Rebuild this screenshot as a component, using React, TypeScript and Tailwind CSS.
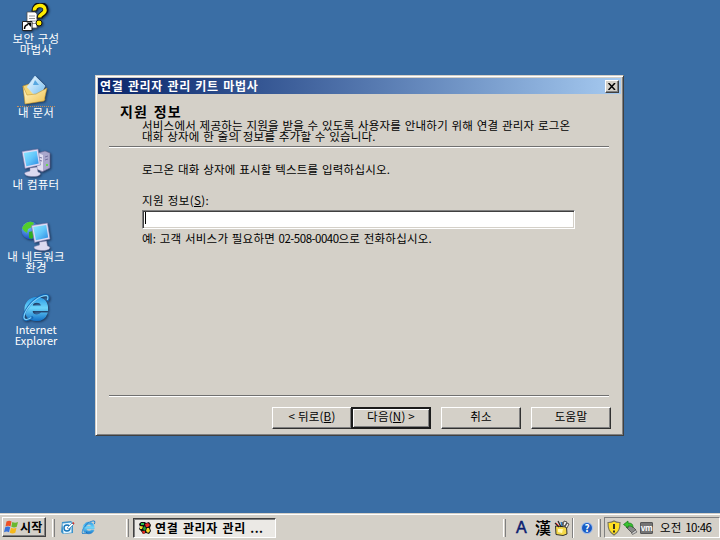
import type { ReactNode } from "react";

const shadow = "[filter:drop-shadow(1px_1px_1px_#1b3558)]";

function ShortcutIcon() {
  return (
    <svg width="30" height="30" viewBox="0 0 30 30" className={shadow}>
      <path d="M6 9h8l2 2v14H6z" fill="#fff" stroke="#555" strokeWidth=".8" />
      <path d="M8 13h6M8 15.500h6M9 18h6M11 20.500h4" stroke="#999" />
      <path d="M13.500 8.500C12.500 0 25.500 0 24.500 7c0 4-6 4-6 8.500" fill="none" stroke="#111" strokeWidth="5.800" />
      <path d="M13.500 7.500C13 1 24.500 1 24 7c0 4-5.500 4-5.500 7.500" fill="none" stroke="#ffec00" strokeWidth="3.600" />
      <circle cx="18" cy="20" r="3" fill="#ffec00" stroke="#111" />
      <path d="M1.500 18.500h9.500v9H1.500z" fill="#fff" stroke="#222" />
      <path d="M3.500 26c0-3 1-4 3.500-4.500" stroke="#000" strokeWidth="1.500" fill="none" />
      <path d="M5.500 19.500H10V24z" />
    </svg>
  );
}

function DocumentsIcon() {
  return (
    <svg width="30" height="30" viewBox="0 0 30 30" className={shadow}>
      <defs>
        <linearGradient id="folder" x1="0" y1="0" x2="1" y2="1">
          <stop offset="0" stopColor="#fffbd5" />
          <stop offset="1" stopColor="#f0c04c" />
        </linearGradient>
        <linearGradient id="sheet" x1="0" y1="0" x2="1" y2="1">
          <stop offset="0" stopColor="#f4fbff" />
          <stop offset="1" stopColor="#69b8ef" />
        </linearGradient>
      </defs>
      <path d="M2 10l6-2 2 3 12 3 2 10-18 3z" fill="#f3d677" stroke="#b48c30" strokeWidth=".6" />
      <path d="M14 0l10 10-7 13L6 11z" fill="url(#sheet)" stroke="#c4e2f6" strokeWidth=".7" />
      <path d="M14 4l4 5h-6z" fill="#58a7e0" />
      <path d="M2 10l4 9 9-1 11-6-3 13L4 28z" fill="url(#folder)" stroke="#c69832" strokeWidth=".6" />
    </svg>
  );
}

function Screen({ id }: { id: string }) {
  return (
    <>
      <defs>
        <linearGradient id={id} x1="0" y1="0" x2="1" y2="1">
          <stop offset="0" stopColor="#8de8ff" />
          <stop offset=".5" stopColor="#62c6fa" />
          <stop offset="1" stopColor="#2a89e2" />
        </linearGradient>
      </defs>
      <path d="M8 19l7-1 1 5c4 1 3 4-3 4.500S1 26 3 23.500l5-1.500z" fill="#dcdaf0" stroke="#8583ad" strokeWidth=".5" />
      <path d="M0 2.500L16 0l2.500 16L3 19.500z" fill="#dedcf5" stroke="#7775a6" strokeWidth=".6" />
      <path d="M1.800 4L14.700 2l2 12.600-12.300 2.700z" fill={`url(#${id})`} />
    </>
  );
}

function ComputerIcon() {
  return (
    <svg width="30" height="30" viewBox="0 0 30 30" className={shadow}>
      <path d="M17 5l7-2 5 2v15l-8 4-5-3z" fill="#a9a7cc" stroke="#65638e" strokeWidth=".6" />
      <path d="M17 5l5 2v16l-6-2z" fill="#e1dff2" />
      <path d="M17 9l4 1M17 12l4 1M24 9l3-1M24 12l3-1" stroke="#7472a0" />
      <path d="M25 16h2v2h-2z" fill="#6ad84b" />
      <g transform="translate(1 1)"><Screen id="screenA" /></g>
    </svg>
  );
}

function NetworkIcon() {
  return (
    <svg width="30" height="30" viewBox="0 0 30 30" className={shadow}>
      <defs>
        <radialGradient id="globe" cx=".35" cy=".3" r=".8">
          <stop offset="0" stopColor="#7bc5ff" />
          <stop offset="1" stopColor="#0b3db5" />
        </radialGradient>
      </defs>
      <circle cx="9.500" cy="9.500" r="9" fill="url(#globe)" />
      <path d="M3 4c4-5 9-3 10-2l-2 4-4 2-1 4-3-2-2-3z" fill="#53cf2b" />
      <path d="M8 11l4-1 2 3-3 5-3-1z" fill="#2fae22" />
      <g transform="translate(10.500 2)"><Screen id="screenB" /></g>
    </svg>
  );
}

function ExplorerIcon({ size = 30, id = "ie" }: { size?: number; id?: string }) {
  return (
    <svg width={size} height={size} viewBox="0 0 30 30" className={size > 20 ? shadow : ""}>
      <defs>
        <linearGradient id={id} x1="0" y1="0" x2="0" y2="1">
          <stop offset="0" stopColor="#2c9be6" />
          <stop offset=".45" stopColor="#6cd5fb" />
          <stop offset="1" stopColor="#1674c9" />
        </linearGradient>
      </defs>
      <path
        d="M26.500 17.500H11c0 3 2 4.500 5 4.500 2.200 0 3.500-.8 4.500-2h5.500c-1.500 5-5.500 7.500-10.500 7.500-7 0-11.500-4-11.500-11S9 4.500 15.500 4.500c7.500 0 11.500 5 11 13zM20.500 13c-.3-2.600-2-3.800-4.800-3.800S11.500 10.400 11 13z"
        fill={`url(#${id})`}
        fillRule="evenodd"
        stroke={`url(#${id})`}
        strokeWidth="1.200"
      />
      <path
        d="M26.500 8c1.500-3.500 1.500-5.500-1-6C21 1 11 7 5.500 16.500c-4 6.500-4 11 .5 10.500 2-.4 4-1.500 6-3"
        fill="none"
        stroke="#1467b5"
        strokeWidth="2.200"
      />
      <path
        d="M26.300 7c1.200-3 .6-4-1-4.300C21 2 11 7.500 5.500 17c-3.500 6-3.500 10 .3 9.500 1.500-.3 3-1 4.500-2"
        fill="none"
        stroke="#7fd3fb"
        strokeWidth="1.200"
      />
    </svg>
  );
}

function DesktopItem({ icon, children }: { icon: ReactNode; children: ReactNode }) {
  return (
    <div className="flex h-[72.5px] w-[72px] flex-col items-center">
      <div className="h-[30px]">{icon}</div>
      <div className="text-center whitespace-nowrap text-white">{children}</div>
    </div>
  );
}

function PushButton({ primary, className = "", children }: { primary?: boolean; className?: string; children: ReactNode }) {
  return (
    <button
      className={`flex h-[22px] w-20 items-center justify-center pb-[3px] whitespace-nowrap ${
        primary
          ? "border-2 border-[#1c1c1c] shadow-[inset_1px_1px_#fff,inset_-1px_-1px_#808080]"
          : "border border-t-white border-r-[#303030] border-b-[#303030] border-l-white shadow-[inset_-1px_-1px_#808080]"
      } ${className}`}
    >
      {children}
    </button>
  );
}

function Rule({ className = "" }: { className?: string }) {
  return <div className={`h-[2px] w-[500px] shrink-0 border-t border-b border-t-[#707070] border-b-white ${className}`} />;
}

function Grip({ className = "" }: { className?: string }) {
  return <div className={`h-[18px] w-[3px] shrink-0 border-r border-l border-r-[#808080] border-l-white ${className}`} />;
}

function WizardDialog() {
  return (
    <section className="absolute top-[75px] left-[95px] flex h-[361px] w-[529px] flex-col border border-t-[#d4d0c8] border-r-[#404040] border-b-[#404040] border-l-[#d4d0c8] bg-[#d4d0c8] p-[2px] shadow-[inset_1px_1px_#fff,inset_-1px_-1px_#808080]">
      <header className="flex h-4 shrink-0 items-center justify-between bg-linear-to-r from-[#0a246a] to-[#a6caf0] pr-[2px] pl-[2px]">
        <h1 className="pb-[2px] text-[12px] font-bold tracking-[0.66px] [word-spacing:1.1px] text-white">연결 관리자 관리 키트 마법사</h1>
        <button className="flex h-[13px] w-[14px] items-center justify-center border border-t-white border-r-[#404040] border-b-[#404040] border-l-white bg-[#d4d0c8] shadow-[inset_-1px_-1px_#808080]">
          <svg width="8" height="7" viewBox="0 0 8 7">
            <path d="M.5 0l6.500 7M7 0L.5 7" stroke="#000" strokeWidth="1.500" />
          </svg>
        </button>
      </header>
      <div className="flex flex-1 flex-col pt-[10px] pl-[11px]">
        <h2 className="pl-[11px] text-[14px] leading-[14px] font-bold tracking-[1.2px] [word-spacing:1.2px]">지원 정보</h2>
        <p className="mt-[2px] pl-[33px] whitespace-nowrap">
          서비스에서 제공하는 지원을 받을 수 있도록 사용자를 안내하기 위해 연결 관리자 로그온
          <br />
          대화 상자에 한 줄의 정보를 추가할 수 있습니다.
        </p>
        <Rule className="mt-[4px]" />
        <div className="flex flex-col pt-[16px] pl-[33px]">
          <p>로그온 대화 상자에 표시할 텍스트를 입력하십시오.</p>
          <label className="mt-5 tracking-[0.4px]">
            지원 정보(<u className="underline-offset-1">S</u>):
          </label>
          <div className="mt-[4px] flex h-[19px] w-[433px] items-start border border-t-[#808080] border-r-white border-b-white border-l-[#808080] bg-white px-[2px] pt-px shadow-[inset_1px_1px_#404040,inset_-1px_-1px_#d4d0c8]">
            <span className="h-[12px] w-px bg-black" />
          </div>
          <p className="mt-[4px]">
            예: 고객 서비스가 필요하면 <span className="tracking-[-0.5px]">02-508-0040</span>으로 전화하십시오.
          </p>
        </div>
        <Rule className="mt-auto" />
        <div className="mt-[10px] mb-[4px] flex pl-[163px]">
          <PushButton>
            &lt; 뒤로(<u>B</u>)
          </PushButton>
          <PushButton primary className="-ml-px">
            다음(<u>N</u>) &gt;
          </PushButton>
          <PushButton className="ml-[10px]">취소</PushButton>
          <PushButton className="ml-[10px]">도움말</PushButton>
        </div>
      </div>
    </section>
  );
}

function WindowsFlag() {
  return (
    <svg width="15" height="14" viewBox="0 0 15 14">
      <path d="M2.500 1.500c2-1 3.500-1 5 0L6.500 6.500c-1.500-1-3-1-5 0z" fill="#ee5125" />
      <path d="M8.300 2c2 1 3.500 1 5.700 0l-1.200 4.800c-2 1-3.500 1-5.500 0z" fill="#69b82e" />
      <path d="M1.200 7.300c2-1 3.500-1 5 0L5 12.300c-1.500-1-3-1-5 0z" fill="#3872da" />
      <path d="M7 7.800c2 1 3.500 1 5.500 0L11.300 12.800c-2 1-3.500 1-5.500 0z" fill="#f6b91b" />
    </svg>
  );
}

function ShowDesktopIcon() {
  return (
    <svg width="15" height="15" viewBox="0 0 15 15">
      <path d="M2 2l9-1 2 2v10l-10 1-2-2z" fill="#3b92ca" />
      <path d="M2.500 3.500l9-1v10l-8 1z" fill="#e4f6ff" />
      <circle cx="7" cy="8" r="3" fill="#fff" stroke="#1575ba" strokeWidth="1.400" />
      <path d="M7 8l5-5 1.500 1.500L9 9z" fill="#fff" stroke="#196ba1" strokeWidth=".6" />
      <path d="M12 3l1.500-1 1 1.500-1 1z" fill="#d6332b" />
    </svg>
  );
}

function WizardIcon() {
  return (
    <svg width="14" height="14" viewBox="0 0 14 14">
      <path d="M3 1h4l1 1 3-1 2 3-1 3 1 3-2 3-3-1-3 1-2-3-2-2 1-2-1-3z" fill="#111" />
      <path d="M3 2h3v2H3z" fill="#27c04a" />
      <path d="M7 3l3-1 2 2-2 2H8z" fill="#e82a23" />
      <path d="M2 5l3 .5L4 8H2z" fill="#f2df2b" />
      <path d="M5 7l2-2 1 3-2 2z" fill="#20a53a" />
      <path d="M9 7h2l1 3-2 2-2-2z" fill="#f4d829" />
      <path d="M4 10l3 0 0 2-2 1z" fill="#e52921" />
    </svg>
  );
}

function ImePadIcon() {
  return (
    <svg width="16" height="16" viewBox="0 0 16 16">
      <path d="M1.500 6l11 1 .5 7-4 1.500-7-1z" fill="#f4d848" stroke="#222" strokeWidth=".9" />
      <path d="M4 9h5l-1 4-4-1z" fill="#fff8b6" />
      <path d="M1 3l4 4M4 1l3 6M8 2v5" stroke="#222" strokeWidth="1.200" />
      <path d="M2 3l3 3" stroke="#e12e2e" />
      <path d="M7 2l1 4" stroke="#278be2" />
      <path d="M10 1l3 1-2 4-2-1zM13 3l2 1-2 4-2-1z" fill="#eee" stroke="#333" strokeWidth=".8" />
    </svg>
  );
}

function HelpIcon() {
  return (
    <span className="flex size-[12px] items-center justify-center rounded-full border border-[#a9c4ef] bg-[#195bc3] text-[10px] leading-[10px] font-bold tracking-normal text-white">
      ?
    </span>
  );
}

function ShieldIcon() {
  return (
    <svg width="14" height="16" viewBox="0 0 14 16">
      <path d="M7 1c2 1.200 4 1.600 6 1.500 0 6-1 9.500-6 12.500C2 12 1 8.500 1 2.500 3 2.600 5 2.200 7 1z" fill="#ffe022" stroke="#77745d" strokeWidth="1.100" />
      <path d="M7 4v5M7 10.500v2" stroke="#222" strokeWidth="1.800" />
    </svg>
  );
}

function RemoveHardwareIcon() {
  return (
    <svg width="15" height="15" viewBox="0 0 15 15">
      <path d="M3 7l5-2 5 5-4 3z" fill="#888" stroke="#444" strokeWidth=".8" />
      <path d="M8.500 13l4-3 1.500 2-4.500 2.500z" fill="#c9c9c9" stroke="#444" strokeWidth=".6" />
      <path d="M.5 4.500L5 1v2c3.500 0 5 1 5 4.500C8.500 6 7 6 5 6v2z" fill="#39c330" stroke="#16751b" strokeWidth=".7" />
    </svg>
  );
}

function Taskbar() {
  return (
    <footer className="flex h-[27px] items-center border-t border-[#d4d0c8] bg-[#d4d0c8] pt-px pl-[2px] shadow-[inset_0_1px_#fff]">
      <button className="mb-px flex h-[20px] w-[44px] items-center border border-t-white border-r-[#404040] border-b-[#404040] border-l-white pl-px font-bold shadow-[inset_-1px_-1px_#808080]">
        <WindowsFlag />
        <span className="ml-px pb-[2px] text-[12px] tracking-[0.2px] whitespace-nowrap">시작</span>
      </button>
      <Grip className="ml-[6px]" />
      <div className="ml-[5px] flex items-center gap-[6px]">
        <ShowDesktopIcon />
        <ExplorerIcon size={15} id="ieSmall" />
      </div>
      <Grip className="ml-[30px]" />
      <div className="ml-[4px] flex h-[20px] w-[143px] items-center border border-t-[#404040] border-r-white border-b-white border-l-[#404040] bg-[#ebe9e5] pl-[4px] font-bold shadow-[inset_1px_1px_#808080]">
        <WizardIcon />
        <span className="ml-[3px] pb-px text-[12px] tracking-[0.66px] [word-spacing:1.1px] whitespace-nowrap">
          연결 관리자 관리 <span className="tracking-[0.4px]">...</span>
        </span>
      </div>
      <Grip className="ml-auto" />
      <span className="ml-[10px] w-[13px] text-[16px] leading-4 tracking-normal text-[#0a1c70] [font-family:'Liberation_Sans',sans-serif] [-webkit-text-stroke:0.5px_#0a1c70]">A</span>
      <span className="ml-[6px] pb-px text-[16px] leading-4 font-medium tracking-normal">漢</span>
      <span className="ml-[3px]"><ImePadIcon /></span>
      <div className="ml-[2px] h-5 w-[2px] border-r border-l border-r-white border-l-[#808080]" />
      <span className="ml-[7px]"><HelpIcon /></span>
      <Grip className="ml-[5px]" />
      <div className="ml-[3px] flex h-[21px] w-[116px] items-center border border-t-[#808080] border-r-white border-b-white border-l-[#808080] pl-[2px]">
        <ShieldIcon />
        <span className="ml-[2px]"><RemoveHardwareIcon /></span>
        <span className="ml-[2px] flex h-[12px] w-[13px] items-center justify-center rounded-[1px] border border-[#555] bg-[#747474] text-[8px] leading-[8px] font-bold tracking-[-0.5px] text-white">
          vm
        </span>
        <time className="ml-[7px] pb-px whitespace-nowrap">
          오전 <span className="tracking-[-0.5px]">10:46</span>
        </time>
      </div>
    </footer>
  );
}

export default function App() {
  return (
    <main className="flex h-[540px] w-[720px] flex-col overflow-hidden bg-[#3a6ea5] text-[11.5px] leading-[11px] tracking-[0.22px] [word-spacing:0.8px] text-black [font-family:'Noto_Sans_CJK_KR',sans-serif]">
      <div className="relative flex-1">
        <nav className="flex flex-col pt-[3px]">
          <DesktopItem icon={<ShortcutIcon />}>
            보안 구성
            <br />
            마법사
          </DesktopItem>
          <DesktopItem icon={<DocumentsIcon />}>
            <span className="block border-t border-dotted border-[#c5915a] px-px">내 문서</span>
          </DesktopItem>
          <DesktopItem icon={<ComputerIcon />}>
            <span className="block pt-px">내 컴퓨터</span>
          </DesktopItem>
          <DesktopItem icon={<NetworkIcon />}>
            내 네트워크
            <br />
            환경
          </DesktopItem>
          <DesktopItem icon={<ExplorerIcon />}>
            <span className="block pt-px text-[11px] tracking-normal">
              Internet
              <br />
              Explorer
            </span>
          </DesktopItem>
        </nav>
        <WizardDialog />
      </div>
      <Taskbar />
    </main>
  );
}
